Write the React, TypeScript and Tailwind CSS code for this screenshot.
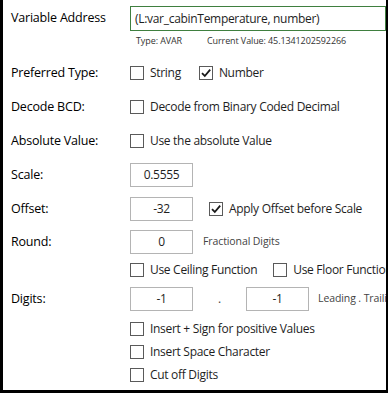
import React from "react";

const font = { fontFamily: '"Open Sans", "Noto Sans", "Liberation Sans", sans-serif' };

function Check({ checked }: { checked?: boolean }) {
  return (
    <span className="relative flex h-[14px] w-[14px] shrink-0 items-center justify-center border border-[#5a5a5a] bg-white">
      {checked && (
        <svg width="12" height="12" viewBox="0 0 12 12" className="absolute">
          <path d="M2 6.2 L4.8 9 L10.2 2.6" fill="none" stroke="#1a1a1a" strokeWidth="1.8" />
        </svg>
      )}
    </span>
  );
}

function CheckItem({ label, checked, className = "" }: { label: string; checked?: boolean; className?: string }) {
  return (
    <div className={"flex items-center gap-[6px] whitespace-nowrap " + className}>
      <Check checked={checked} />
      <span className="text-[12px] tracking-[-0.3px] text-[#1e1e1e]">{label}</span>
    </div>
  );
}

function Box({ value, className = "" }: { value: string; className?: string }) {
  return (
    <div className={"flex h-[24px] w-[63px] shrink-0 items-center justify-center border border-[#b4b4b4] bg-white text-[12px] tracking-[-0.3px] text-[#1e1e1e] " + className}>
      {value}
    </div>
  );
}

function Row({ label, h, children }: { label?: string; h: string; children?: React.ReactNode }) {
  return (
    <div className={"flex items-center " + h}>
      <div className="w-[127px] shrink-0 pl-[8px] text-[12.5px] font-medium tracking-[-0.2px] text-black">{label}</div>
      <div className="flex min-w-0 items-center">{children}</div>
    </div>
  );
}

export default function App() {
  return (
    <div
      style={font}
      className="h-[393px] w-[388px] overflow-hidden border-b-[3px] border-l-[3px] border-r-[2px] border-black bg-white"
    >
      <div className="flex flex-col">
        <div className="mt-[6px] flex h-[25px] items-center">
          <div className="w-[127px] shrink-0 pl-[8px] text-[12.5px] font-medium tracking-[-0.2px] text-black">Variable Address</div>
          <div className="flex h-[25px] flex-1 items-center whitespace-nowrap border border-[#3f7f3f] pl-[4px] text-[12px] tracking-[-0.3px] text-[#1e1e1e]">
            (L:var_cabinTemperature, number)
          </div>
        </div>
        <div className="flex h-[25px] pl-[133px] pt-[3px] text-[9px] tracking-[-0.1px] text-[#333]">
          <span className="w-[71px]">Type: AVAR</span>
          <span>Current Value: 45.1341202592266</span>
        </div>
        <Row label="Preferred Type:" h="h-[34px]">
          <CheckItem label="String" />
          <CheckItem label="Number" checked className="ml-[18px]" />
        </Row>
        <Row label="Decode BCD:" h="h-[34px]">
          <CheckItem label="Decode from Binary Coded Decimal" />
        </Row>
        <Row label="Absolute Value:" h="h-[34px]">
          <CheckItem label="Use the absolute Value" />
        </Row>
        <Row label="Scale:" h="h-[34px]">
          <Box value="0.5555" />
        </Row>
        <Row label="Offset:" h="h-[34px]">
          <Box value="-32" />
          <CheckItem label="Apply Offset before Scale" checked className="ml-[16px]" />
        </Row>
        <Row label="Round:" h="h-[32px]">
          <Box value="0" />
          <span className="ml-[10px] text-[10.5px] tracking-[-0.1px] text-[#444]">Fractional Digits</span>
        </Row>
        <Row h="h-[23px]">
          <div className="flex items-center whitespace-nowrap">
            <CheckItem label="Use Ceiling Function" />
            <CheckItem label="Use Floor Function" className="ml-[16px]" />
          </div>
        </Row>
        <Row label="Digits:" h="h-[36px]">
          <div className="flex items-center whitespace-nowrap">
            <Box value="-1" />
            <span className="w-[53px] text-center text-[12px] text-[#444]">.</span>
            <Box value="-1" />
            <span className="ml-[9px] text-[10.5px] tracking-[-0.1px] text-[#444]">Leading . Trailing</span>
          </div>
        </Row>
        <Row h="h-[23px]">
          <CheckItem label="Insert + Sign for positive Values" />
        </Row>
        <Row h="h-[23px]">
          <CheckItem label="Insert Space Character" />
        </Row>
        <Row h="h-[23px]">
          <CheckItem label="Cut off Digits" />
        </Row>
      </div>
    </div>
  );
}
